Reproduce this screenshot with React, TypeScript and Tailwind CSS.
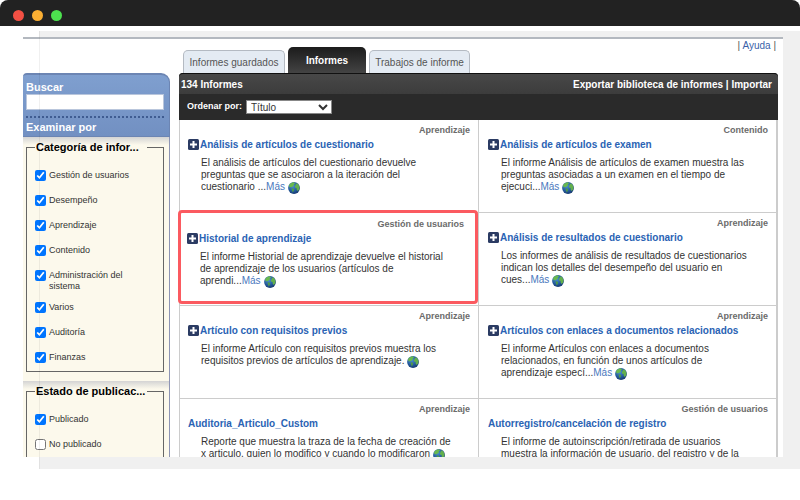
import React from "react";

type Report = {
  title: string;
  category: string;
  lines: string[];
  more?: boolean;
  globe?: boolean;
  expandable?: boolean;
  highlighted?: boolean;
};

const reports: Report[] = [
  {
    title: "Análisis de artículos de cuestionario",
    category: "Aprendizaje",
    lines: ["El análisis de artículos del cuestionario devuelve", "preguntas que se asociaron a la iteración del", "cuestionario ..."],
    more: true,
    globe: true,
    expandable: true,
  },
  {
    title: "Análisis de artículos de examen",
    category: "Contenido",
    lines: ["El informe Análisis de artículos de examen muestra las", "preguntas asociadas a un examen en el tiempo de", "ejecuci..."],
    more: true,
    globe: true,
    expandable: true,
  },
  {
    title: "Historial de aprendizaje",
    category: "Gestión de usuarios",
    lines: ["El informe Historial de aprendizaje devuelve el historial", "de aprendizaje de los usuarios (artículos de", "aprendi..."],
    more: true,
    globe: true,
    expandable: true,
    highlighted: true,
  },
  {
    title: "Análisis de resultados de cuestionario",
    category: "Aprendizaje",
    lines: ["Los informes de análisis de resultados de cuestionarios", "indican los detalles del desempeño del usuario en", "cues..."],
    more: true,
    globe: true,
    expandable: true,
  },
  {
    title: "Artículo con requisitos previos",
    category: "Aprendizaje",
    lines: ["El informe Artículo con requisitos previos muestra los", "requisitos previos de artículos de aprendizaje."],
    globe: true,
    expandable: true,
  },
  {
    title: "Artículos con enlaces a documentos relacionados",
    category: "Aprendizaje",
    lines: ["El informe Artículos con enlaces a documentos", "relacionados, en función de unos artículos de", "aprendizaje especí..."],
    more: true,
    globe: true,
    expandable: true,
  },
  {
    title: "Auditoria_Articulo_Custom",
    category: "Aprendizaje",
    lines: ["Reporte que muestra la traza de la fecha de creación de", "x articulo, quien lo modifico y cuando lo modificaron"],
    globe: true,
  },
  {
    title: "Autorregistro/cancelación de registro",
    category: "Gestión de usuarios",
    lines: ["El informe de autoinscripción/retirada de usuarios", "muestra la información de usuario, del registro y de la"],
  },
];

const categories = [
  "Gestión de usuarios",
  "Desempeño",
  "Aprendizaje",
  "Contenido",
  "Administración del sistema",
  "Varios",
  "Auditoría",
  "Finanzas",
];

function PlusIcon() {
  return (
    <svg viewBox="0 0 11 11" className="size-[11px]" aria-hidden="true">
      <rect width="11" height="11" rx="1.5" fill="#2b3b63" />
      <path d="M5.5 2v7M2 5.5h7" stroke="#fff" strokeWidth="2" />
    </svg>
  );
}

function Globe() {
  return (
    <svg viewBox="0 0 12 12" className="ml-[3px] inline-block size-3 align-[-4px]" aria-hidden="true">
      <defs>
        <radialGradient id="sea" cx="0.4" cy="0.35" r="0.7">
          <stop offset="0" stopColor="#4a8fd0" />
          <stop offset="0.6" stopColor="#245a9c" />
          <stop offset="1" stopColor="#15356a" />
        </radialGradient>
      </defs>
      <circle cx="6" cy="6" r="5.9" fill="url(#sea)" />
      <path d="M1 3.4C2 1.5 3.8.4 6 .3L7 1.4 5.6 2.4 6 3.4 4.6 4.4 4 5.2 2.8 5 1.8 5.8z" fill="#69b94e" />
      <path d="M3.6 6.2L5.4 6.6 6.2 7.8 5.4 9.4 4.8 10.6 4 8.6z" fill="#4f9a48" />
      <path d="M7.4 1.8L9.4 1.6 11 3.6 11.6 6 10.8 8 9.6 9 8.6 7.4 8.6 6 7 5.4 6.8 3.8 8 3z" fill="#63b04c" />
    </svg>
  );
}

function CheckRow({ label, checked = true }: { label: string; checked?: boolean }) {
  return (
    <li className="min-h-[25px] pb-[10px] last:min-h-0 last:pb-2">
      <label className="flex items-start gap-[3px] text-[9px] leading-[11px] text-[#333]">
        <input type="checkbox" defaultChecked={checked} className="m-0 size-[11px] shrink-0" />
        <span className="max-w-[90px]">{label}</span>
      </label>
    </li>
  );
}

function FilterGroup({ title, children }: { title: string; children: React.ReactNode }) {
  return (
    <section className="border-r border-[#8d94b4] bg-[#fcf9ec] bg-[linear-gradient(#d4d4d4,#fcf9ec_8px)] pt-1 pr-[5px] pb-[9px] pl-[3px]">
      <fieldset className="min-w-0 border border-[#666]">
        <legend className="ml-2 w-[112px] truncate px-px text-[11px] leading-3 font-bold text-black">{title}</legend>
        <ul className="pt-[17px] pl-2">{children}</ul>
      </fieldset>
    </section>
  );
}

function ReportCell({ report }: { report: Report }) {
  const { title, category, lines, more, globe, expandable, highlighted } = report;
  return (
    <article
      className={`relative h-[93px] border-r border-b border-[#ccc] even:border-r-2 even:pl-[9px] ${
        highlighted ? "pt-[5px] pr-[14px] pl-[7px]" : "pt-1 pr-2 pl-2"
      }`}
    >
      {highlighted && <div className="pointer-events-none absolute -top-[3px] right-0 bottom-px -left-[2px] rounded-[4px] border-[3px] border-[#fb5a60]" />}
      <p className="text-right text-[9px] leading-3 font-bold text-[#6b6b6b]">{category}</p>
      <h2 className="flex items-center gap-px text-[10px] leading-[18px] font-bold text-[#2a63b4]">
        {expandable && (
          <button type="button" aria-label={`Expandir ${title}`} className="mb-[2px] shrink-0">
            <PlusIcon />
          </button>
        )}
        <a href="#" className="whitespace-nowrap">{title}</a>
      </h2>
      <p className="mt-[3px] pl-[13px] text-[10px] leading-3 whitespace-nowrap text-[#333]">
        {lines.map((line, i) => (
          <React.Fragment key={line}>
            {i > 0 && <br />}
            {line}
          </React.Fragment>
        ))}
        {more && <a href="#" className="text-[#4a78bd]">Más</a>}
        {globe && <Globe />}
      </p>
    </article>
  );
}

export default function App() {
  return (
    <div className="flex h-screen flex-col bg-white font-['Liberation_Sans',Arial,sans-serif]">
      <header className="flex h-[26px] shrink-0 items-center gap-2 rounded-t-[8px] bg-[#222] pt-1 pl-[13px]">
        <span className="size-[11px] rounded-full bg-[#f35044]" />
        <span className="size-[11px] rounded-full bg-[#fbaf33]" />
        <span className="size-[11px] rounded-full bg-[#4de34f]" />
      </header>

      <div className="relative mt-[5px] mb-[31px] ml-[39px] flex min-h-0 flex-1 flex-col bg-[#f0f0f0] pt-[6px] pr-[17px] pb-3">
        <div className="-ml-4 flex min-h-0 flex-1 flex-col overflow-hidden border-t-2 border-[#b3b8bf] bg-white">
          <div className="flex h-[34px] shrink-0 items-end pl-[160px]">
            <nav className="flex items-end text-[10px] text-[#555]">
              <button type="button" className="h-[23px] w-[102px] rounded-t-[5px] border border-b-0 border-[#b4bac2] bg-[#e4ebf3]">Informes guardados</button>
              <button type="button" className="mx-[3px] h-[26px] w-[78px] rounded-t-[5px] bg-linear-to-b from-[#1c1c1c] to-[#444] font-bold text-white">Informes</button>
              <button type="button" className="h-[23px] w-[101px] rounded-t-[5px] border border-b-0 border-[#b4bac2] bg-[#e4ebf3]">Trabajos de informe</button>
            </nav>
            <p className="mr-[7px] ml-auto self-start text-[10px] leading-[14px] text-[#555]">
              | <a href="#" className="text-[#3a5fa8]">Ayuda</a> |
            </p>
          </div>

          <div className="flex min-h-0 flex-1 gap-[9px] pr-[5px]">
            <aside className="w-[147px] shrink-0">
              <div className="flex h-16 flex-col rounded-t-[4px] rounded-tr-[9px] border-t-2 border-r border-b border-[#6c85b3] bg-linear-to-b from-[#7f9fcf] to-[#7290c2] pr-[5px] pl-[3px] text-[11px] font-bold text-white">
                <label htmlFor="buscar" className="pt-[5px] leading-[14px]">Buscar</label>
                <input id="buscar" type="text" className="block h-4 w-full border border-[#b9c6dc] bg-white px-1 text-[10px] font-normal text-black" />
                <div className="mt-[6px] border-t-2 border-dotted border-[#3f5c91]" />
                <h2 className="pt-[2px] leading-[14px]">Examinar por</h2>
              </div>
              <FilterGroup title="Categoría de infor...">
                {categories.map((c) => (
                  <CheckRow key={c} label={c} />
                ))}
              </FilterGroup>
              <FilterGroup title="Estado de publicac...">
                <CheckRow label="Publicado" />
                <CheckRow label="No publicado" checked={false} />
              </FilterGroup>
            </aside>

            <main className="min-w-0 flex-1">
              <div className="rounded-t-[4px] bg-[#2a2a2a] text-[10px] font-bold text-white">
                <div className="flex h-[21px] items-center justify-between rounded-t-[4px] border-t border-[#111] bg-linear-to-b from-[#484848] to-[#3c3c3c] pr-[6px] pl-[2px]">
                  <h1>134 Informes</h1>
                  <p>
                    <a href="#">Exportar biblioteca de informes</a> | <a href="#">Importar</a>
                  </p>
                </div>
                <div className="flex h-[26px] items-center gap-1 pl-2">
                  <label htmlFor="orden" className="text-[9px]">Ordenar por:</label>
                  <select id="orden" defaultValue="titulo" className="h-[14px] w-[86px] border border-[#888] bg-white p-0 text-[10px] leading-3 font-normal text-[#333]">
                    <option value="titulo">Título</option>
                    <option value="categoria">Categoría</option>
                  </select>
                </div>
              </div>
              <div className="grid grid-cols-2 border-l border-[#ccc]">
                {reports.map((r) => (
                  <ReportCell key={r.title} report={r} />
                ))}
              </div>
            </main>
          </div>
        </div>
        <div className="pointer-events-none absolute inset-y-0 left-0 w-px bg-black/6" />
      </div>
    </div>
  );
}
